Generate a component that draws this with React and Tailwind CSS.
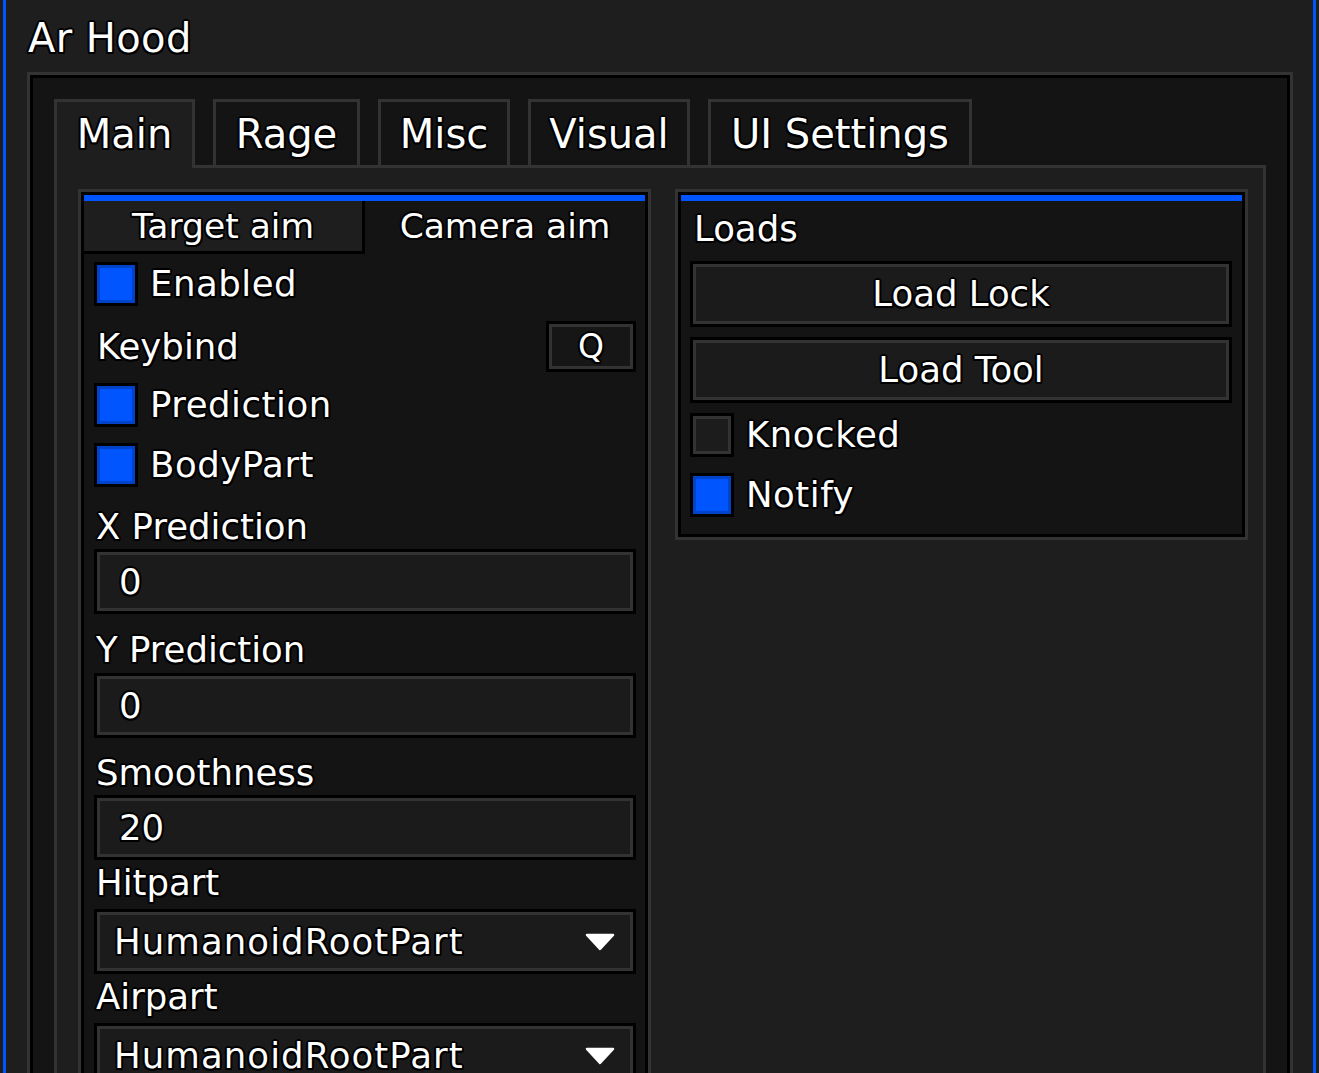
import React from "react";

const T =
  "text-white leading-none whitespace-nowrap [text-shadow:2px_0_0_#000,-2px_0_0_#000,0_2px_0_#000,0_-2px_0_#000,1.5px_1.5px_0_#000,-1.5px_1.5px_0_#000,1.5px_-1.5px_0_#000,-1.5px_-1.5px_0_#000,0_0_2px_#000]";

function Check({ on }) {
  return (
    <div className="w-[44px] h-[44px] border-[3px] border-black shrink-0">
      {on ? (
        <div className="w-full h-full border-[3px] border-[#0042c8] bg-[#0055ff]" />
      ) : (
        <div className="w-full h-full border-[3px] border-[#333333] bg-[#1c1c1c]" />
      )}
    </div>
  );
}

function CheckRow({ on, label, className }) {
  return (
    <div className={`flex items-center gap-[12px] h-[45px] ${className}`}>
      <Check on={on} />
      <span className={`${T} text-[35.5px] tracking-[0.015em]`}>{label}</span>
    </div>
  );
}

function Label({ children, className }) {
  return (
    <div className={`h-[36px] flex items-center pl-[2px] ${className}`}>
      <span className={`${T} text-[35.5px]`}>{children}</span>
    </div>
  );
}

function Box({ children, className, inner }) {
  return (
    <div className={`border-[3px] border-black ${className}`}>
      <div className={`w-full h-full border-[3px] border-[#333333] bg-[#1b1b1b] flex items-center ${inner}`}>
        {children}
      </div>
    </div>
  );
}

function Input({ value, className }) {
  return (
    <Box className={`h-[65px] ${className}`} inner="pl-[19px]">
      <span className={`${T} text-[35.5px]`}>{value}</span>
    </Box>
  );
}

function Dropdown({ value, className }) {
  return (
    <Box className={`h-[65px] ${className}`} inner="pl-[14px] pr-[14px] justify-between">
      <span className={`${T} text-[35.5px] tracking-[0.03em]`}>{value}</span>
      <svg width="32" height="20" viewBox="0 0 32 20">
        <path d="M3 3 H29 L16 17 Z" fill="#fff" stroke="#fff" strokeWidth="2.5" strokeLinejoin="round" />
      </svg>
    </Box>
  );
}

function Tab({ label, w, active }) {
  if (active) {
    return (
      <div
        className={`${w} h-[69px] -mb-[3px] relative z-10 border-[3px] border-b-0 border-[#333333] bg-[#1e1e1e] flex items-center justify-center pb-[3px]`}
      >
        <span className={`${T} text-[40px]`}>{label}</span>
      </div>
    );
  }
  return (
    <div
      className={`${w} h-[66px] border-[3px] border-b-0 border-[#333333] bg-[#141414] flex items-center justify-center`}
    >
      <span className={`${T} text-[40px]`}>{label}</span>
    </div>
  );
}

function Section({ children }) {
  return (
    <div className="w-[573px] border-[3px] border-[#333333] self-start shrink-0">
      <div className="border-[3px] border-black bg-[#141414]">
        <div className="h-[6px] bg-[#0055ff]" />
        {children}
      </div>
    </div>
  );
}

export default function App() {
  return (
    <div className="w-[1319px] h-[1073px] overflow-hidden bg-[#1e1e1e] font-['DejaVu_Sans',sans-serif]">
      <div className="ml-[3px] w-[1313px] h-[1200px] border-x-[3px] border-[#0055ff] bg-[#1e1e1e] flex flex-col">
        <div className="h-[72px] shrink-0 pl-[22px] pt-[3px] flex items-center">
          <span className={`${T} text-[40px] tracking-[0.01em]`}>Ar Hood</span>
        </div>
        <div className="ml-[21px] w-[1266px] h-[1120px] shrink-0 border-[3px] border-[#333333]">
          <div className="h-full border-[3px] border-black bg-[#141414] pt-[21px] px-[21px] flex flex-col">
            <div className="flex items-end gap-[18px] h-[66px] shrink-0">
              <Tab label="Main" w="w-[141px]" active />
              <Tab label="Rage" w="w-[147px]" />
              <Tab label="Misc" w="w-[132px]" />
              <Tab label="Visual" w="w-[162px]" />
              <Tab label="UI Settings" w="w-[264px]" />
            </div>
            <div className="flex-1 border-[3px] border-b-0 border-[#333333] bg-[#1e1e1e] flex gap-[24px] pl-[21px] pt-[21px]">
              <Section>
                <div className="flex h-[53px]">
                  <div className="w-[281px] border-r-[3px] border-b-[3px] border-black bg-[#1e1e1e] flex items-center justify-center">
                    <span className={`${T} text-[34.5px]`}>Target aim</span>
                  </div>
                  <div className="flex-1 flex items-center justify-center pb-[3px]">
                    <span className={`${T} text-[34.5px]`}>Camera aim</span>
                  </div>
                </div>
                <div className="pl-[10px] pr-[9px] pb-[40px] flex flex-col">
                  <CheckRow on label="Enabled" className="mt-[7px]" />
                  <div className="mt-[15px] h-[51px] flex items-center justify-between">
                    <span className={`${T} text-[35.5px] pl-[3px]`}>Keybind</span>
                    <Box className="w-[90px] h-[51px]" inner="justify-center bg-[#161616]">
                      <span className={`${T} text-[33px]`}>Q</span>
                    </Box>
                  </div>
                  <CheckRow on label="Prediction" className="mt-[10px]" />
                  <CheckRow on label="BodyPart" className="mt-[15px]" />
                  <Label className="mt-[22px]">X Prediction</Label>
                  <Input value="0" className="mt-[4px]" />
                  <Label className="mt-[18px]">Y Prediction</Label>
                  <Input value="0" className="mt-[5px]" />
                  <Label className="mt-[17px]">Smoothness</Label>
                  <Input value="20" className="mt-[4px]" />
                  <Label className="mt-[5px]">Hitpart</Label>
                  <Dropdown value="HumanoidRootPart" className="mt-[8px]" />
                  <Label className="mt-[5px]">Airpart</Label>
                  <Dropdown value="HumanoidRootPart" className="mt-[8px]" />
                </div>
              </Section>
              <Section>
                <div className="pl-[9px] pr-[10px] pb-[17px] flex flex-col">
                  <div className="h-[56px] flex items-center pl-[4px]">
                    <span className={`${T} text-[35.5px]`}>Loads</span>
                  </div>
                  <Box className="mt-[4px] h-[66px]" inner="justify-center">
                    <span className={`${T} text-[35.5px]`}>Load Lock</span>
                  </Box>
                  <Box className="mt-[10px] h-[66px]" inner="justify-center">
                    <span className={`${T} text-[35.5px]`}>Load Tool</span>
                  </Box>
                  <CheckRow label="Knocked" className="mt-[9px]" />
                  <CheckRow on label="Notify" className="mt-[15px]" />
                </div>
              </Section>
            </div>
          </div>
        </div>
      </div>
    </div>
  );
}
